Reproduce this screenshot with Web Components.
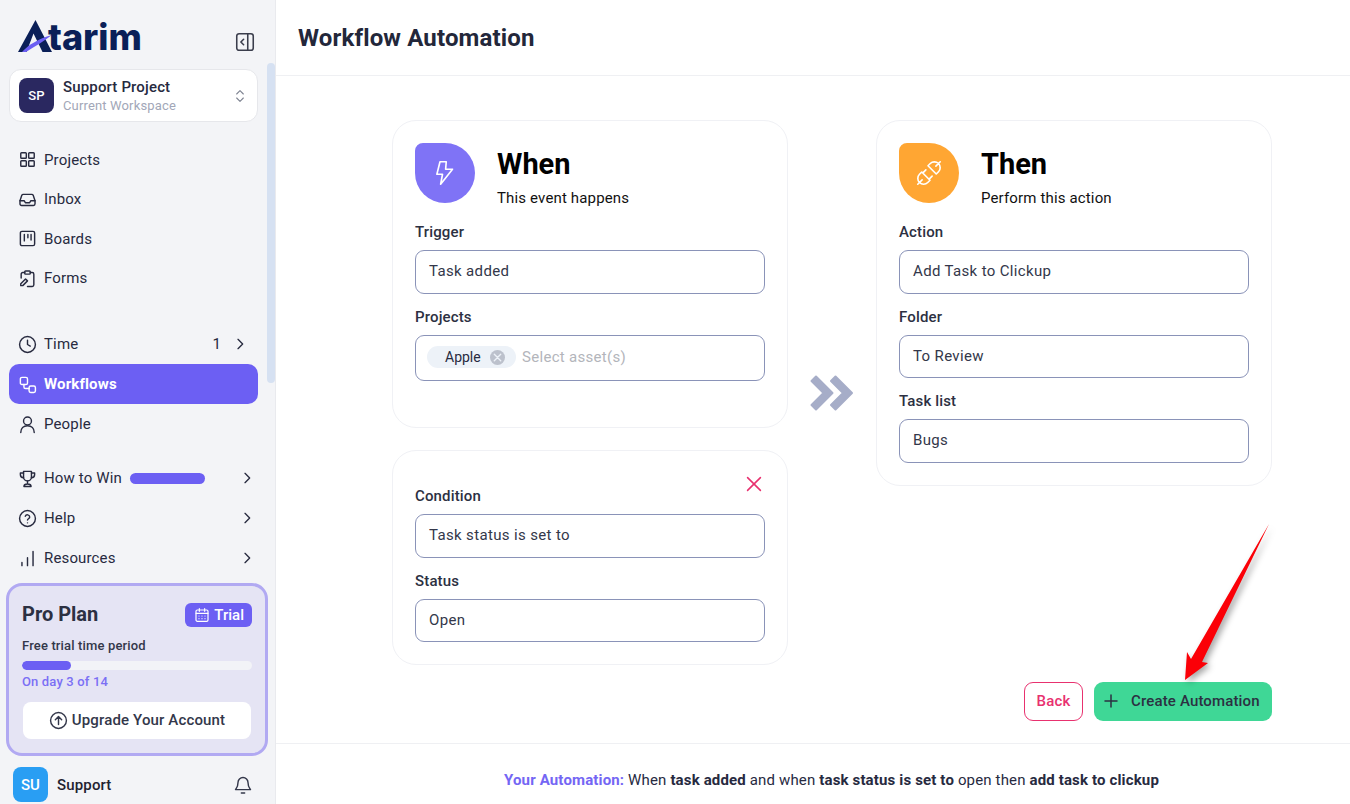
<!DOCTYPE html>
<html lang="en">
<head>
<meta charset="utf-8">
<title>Workflow Automation</title>
<style>
    html, body { margin: 0; height: 100%; overflow: hidden; background: #fff; }
    body { font-family: Roboto, "Liberation Sans", sans-serif; color: #272a3f; letter-spacing: .15px; }
</style>
</head>
<body>
<atarim-app></atarim-app>

<script>
"use strict";

class BaseComponent extends HTMLElement {
    constructor() {
        super();
        this.attachShadow({mode: "open"});
    }

    connectedCallback() {
        this.shadowRoot.innerHTML = `<style>${this.css || ""}</style>${this.html || ""}`;
    }

    attr(name, fallback = "") {
        const value = this.getAttribute(name);
        return value == null ? fallback : value;
    }

    static define(name) {
        if (customElements.get(name) == null) {
            customElements.define(name, this);
        }
    }
}

const svg = (body, size = 18, width = 2) => `<svg xmlns="http://www.w3.org/2000/svg" width="${size}" height="${size}" viewBox="0 0 24 24" fill="none" stroke="currentColor" stroke-width="${width}" stroke-linecap="round" stroke-linejoin="round">${body}</svg>`;

const ICONS = {
    projects: '<rect x="3.5" y="3.5" width="7" height="7" rx="1"/><rect x="13.5" y="3.5" width="7" height="7" rx="1"/><rect x="3.5" y="13.5" width="7" height="7" rx="1"/><rect x="13.5" y="13.5" width="7" height="7" rx="1"/>',
    inbox: '<path d="M2.5 13.5h5.2l1.6 2.5h5.4l1.6-2.5h5.2"/><path d="M6.6 5.5h10.8c.8 0 1.5.5 1.8 1.2l2.3 6.8v4c0 1.1-.9 2-2 2H4.5c-1.1 0-2-.9-2-2v-4l2.3-6.8c.3-.7 1-1.2 1.8-1.2z"/>',
    boards: '<rect x="3" y="3" width="18" height="18" rx="2"/><path d="M8 7v8M12.5 7v4M16.5 7v7"/>',
    forms: '<path d="M8.5 4.5H6a2 2 0 0 0-2 2v5M15.5 4.5H18a2 2 0 0 1 2 2V20a2 2 0 0 1-2 2h-6"/><rect x="8.5" y="2.5" width="7" height="4" rx="1"/><path d="M9.5 12.5l2.5 2.5-6 6H3.5v-2.5z"/>',
    clock: '<circle cx="12" cy="12" r="10"/><path d="M12 6.5V12l3.5 2"/>',
    workflows: '<rect x="3" y="3" width="9" height="9" rx="2"/><rect x="14" y="14" width="8" height="8" rx="2"/><path d="M7.5 12v3c0 1.1.9 2 2 2H14"/>',
    people: '<circle cx="12" cy="7.5" r="5"/><path d="M3.5 22c0-5 3.5-8.5 8.5-8.5s8.5 3.5 8.5 8.5"/>',
    trophy: '<path d="M7 3h10v7a5 5 0 0 1-10 0z"/><path d="M7 5H3v2a4 4 0 0 0 4 4M17 5h4v2a4 4 0 0 1-4 4M12 15v4M7.5 22c0-2 1.5-3 4.5-3s4.5 1 4.5 3z"/>',
    help: '<circle cx="12" cy="12" r="10"/><path d="M9.2 9.2a2.9 2.9 0 0 1 5.6.9c0 1.9-2.8 2.5-2.8 3.9"/><path d="M12 17.5h.01"/>',
    resources: '<path d="M5 21v-4M12 21V11M19 21V3"/>',
    chevron: '<path d="M9 5l7 7-7 7"/>',
    calendar: '<rect x="3" y="4.5" width="18" height="17" rx="2"/><path d="M3 9.5h18M8 2.5v4M16 2.5v4M7.5 13.5h.01M12 13.5h.01M16.5 13.5h.01M7.5 17.5h.01M12 17.5h.01M16.5 17.5h.01"/>',
    upgrade: '<circle cx="12" cy="12" r="10"/><path d="M12 17V7.5M8 11l4-4 4 4"/>',
    bell: '<path d="M6 9a6 6 0 0 1 12 0c0 6 2.5 7.5 3 8.5H3c.5-1 3-2.5 3-8.5z"/><path d="M10 21.5h4"/>',
    collapse: '<rect x="3" y="3" width="18" height="18" rx="2.5"/><path d="M15 3v18M10.5 9l-3 3 3 3"/>',
    updown: '<path d="M7 9l5-5 5 5M7 15l5 5 5-5"/>',
    bolt: '<path d="M13 3H8L5.5 13H10l-1.5 8L18 9h-5.5z"/>',
    plug: '<path d="M3 21l3.5-3.5M21 3l-3.5 3.5M6.2 11.2l6.6 6.6-1.8 1.8c-1.8 1.8-4.8 1.8-6.6 0s-1.8-4.8 0-6.6zM17.8 12.8l-6.6-6.6 1.8-1.8c1.8-1.8 4.8-1.8 6.6 0s1.8 4.8 0 6.6zM9.5 9.5l-2 2M14.5 14.5l-2 2"/>',
    close: '<path d="M5 5l14 14M19 5L5 19"/>',
    plus: '<path d="M12 4v16M4 12h16"/>',
};

class NavItem extends BaseComponent {
    get css() {
        return `
            :host { display: block; }
            .row { display: flex; align-items: center; height: var(--row, 40px); margin: 0 17px 0 9px; padding: 0 9px; box-sizing: border-box; border-radius: 10px; gap: 8px; font-size: 15px; color: #272a3f; }
            :host([active]) .row { background: #6c5ff3; color: #fff; font-weight: 700; }
            .icon { display: flex; width: 18px; justify-content: center; }
            .icon svg { flex: none; margin: 0 -.5px; }
            .grow { flex: 1; display: flex; align-items: center; min-width: 0; }
            .pill { width: 75px; height: 11px; border-radius: 6px; background: #6c5ff3; margin-left: 8px; }
            .count { margin-right: 3px; font-size: 15px; }
            .chev { display: flex; margin-right: var(--chev, 1px); }
        `;
    }

    get html() {
        const chevron = this.hasAttribute("chevron") ? `<span class="chev">${svg(ICONS.chevron, 16, 2)}</span>` : "";
        const count = this.hasAttribute("count") ? `<span class="count">${this.attr("count")}</span>` : "";
        const pill = this.hasAttribute("pill") ? `<span class="pill"></span>` : "";
        return `<div class="row"><span class="icon">${svg(ICONS[this.attr("icon")], 19, 1.8)}</span><span class="grow"><slot></slot>${pill}</span>${count}${chevron}</div>`;
    }
}

class WorkspaceCard extends BaseComponent {
    get css() {
        return `
            :host { display: flex; align-items: center; height: 53px; margin: 0 17px 0 9px; padding: 0 9px 0 9px; box-sizing: border-box; background: #fff; border: 1px solid #e6e7eb; border-radius: 12px; }
            .avatar { width: 35px; height: 35px; border-radius: 8px; background: #2a2860; color: #fff; font-size: 13px; font-weight: 500; display: flex; align-items: center; justify-content: center; }
            .text { flex: 1; margin-left: 9px; padding-top: 2px; }
            .name { font-size: 15px; font-weight: 500; line-height: 19px; color: #272a3f; }
            .sub { font-size: 13px; line-height: 18px; color: #a2a7b8; }
            .updown { display: flex; color: #7d8290; }
        `;
    }

    get html() {
        return `<div class="avatar">SP</div><div class="text"><div class="name">Support Project</div><div class="sub">Current Workspace</div></div><span class="updown">${svg(ICONS.updown, 16, 1.6)}</span>`;
    }
}

class PlanCard extends BaseComponent {
    get css() {
        return `
            :host { display: block; height: 173px; margin: 0 7px 0 6px; padding: 17px 13px 0; box-sizing: border-box; background: #e5e4f4; border: 3px solid #b1a9f2; border-radius: 16px; }
            .top { display: flex; justify-content: space-between; align-items: center; height: 24px; }
            h3 { margin: -2px 0 0; font-size: 20px; font-weight: 700; letter-spacing: 0; color: #2c3042; }
            .badge { display: flex; align-items: center; gap: 4px; height: 24px; padding: 0 8px 0 9px; background: #6c5ff3; color: #fff; border-radius: 6px; font-size: 15px; font-weight: 500; letter-spacing: 0; }
            .label { margin-top: 9px; font-size: 13px; line-height: 20px; font-weight: 500; color: #33374a; }
            .track { height: 9px; margin-top: 5px; background: #f2f3f7; border-radius: 5px; overflow: hidden; }
            .fill { width: 49px; height: 100%; background: #6c5ff3; border-radius: 5px; }
            .day { margin-top: 3px; font-size: 13px; line-height: 18px; font-weight: 500; color: #7b6ff4; }
            .upgrade { display: flex; align-items: center; justify-content: center; gap: 4px; height: 37px; margin: 11px 1px 0 1px; padding-bottom: 1px; box-sizing: border-box; background: #fff; border-radius: 8px; font-size: 15px; font-weight: 500; color: #33374a; }
            .upgrade svg { flex: none; }
        `;
    }

    get html() {
        return `
            <div class="top"><h3>Pro Plan</h3><span class="badge">${svg(ICONS.calendar, 16, 1.8)}Trial</span></div>
            <div class="label">Free trial time period</div>
            <div class="track"><div class="fill"></div></div>
            <div class="day">On day 3 of 14</div>
            <div class="upgrade">${svg(ICONS.upgrade, 19, 1.8)}Upgrade Your Account</div>
        `;
    }
}

class SideBar extends BaseComponent {
    get css() {
        return `
            :host { display: block; position: relative; z-index: 1; flex: none; width: 275px; height: 804px; box-sizing: border-box; background: #f3f4f7; box-shadow: 1px 0 0 #e9eaee; overflow: hidden; }
            .logo-row { display: flex; align-items: flex-start; justify-content: space-between; height: 69px; padding: 19px 19px 0 18px; box-sizing: border-box; }
            .logo { display: flex; align-items: flex-end; height: 34px; }
            .word { font-family: Inter, Roboto, sans-serif; font-weight: 800; font-size: 36px; line-height: 32px; letter-spacing: 0; color: #0a1f58; margin-left: -4px; }
            .collapse { display: flex; margin-top: 12px; color: #3a3d4c; }
            .group-a { --row: 39.5px; margin-top: 18px; }
            .group-b { margin-top: 26px; }
            .group-c { margin-top: 14px; --chev: -6px; }
            .plan { margin-top: 5px; display: block; }
            .foot { display: flex; align-items: center; height: 35px; margin-top: 11px; padding: 0 22px 0 13px; }
            .su { width: 35px; height: 35px; border-radius: 8px; background: #299ef3; color: #fff; font-size: 15px; font-weight: 500; display: flex; align-items: center; justify-content: center; }
            .who { flex: 1; margin-left: 9px; font-size: 15px; font-weight: 500; color: #1f2230; }
            .bell { display: flex; color: #33374a; }
            .thumb { position: absolute; right: 0; top: 63px; width: 8px; height: 320px; background: #d6e1f2; border-radius: 4px; }
        `;
    }

    get html() {
        return `
            <div class="logo-row">
                <div class="logo">
                    <svg width="34" height="34" viewBox="0 0 34 34"><path d="M17.5 1L34 33H24.5L15.5 14.5 8.5 33H0z" fill="#0a1f58"/><path d="M4 33C10 26 20 20 34 16 26 22 16 28 8 33z" fill="#6c5ff3"/></svg>
                    <span class="word">tarim</span>
                </div>
                <span class="collapse">${svg(ICONS.collapse, 22, 1.7)}</span>
            </div>
            <workspace-card></workspace-card>
            <div class="group-a">
                <nav-item icon="projects">Projects</nav-item>
                <nav-item icon="inbox">Inbox</nav-item>
                <nav-item icon="boards">Boards</nav-item>
                <nav-item icon="forms">Forms</nav-item>
            </div>
            <div class="group-b">
                <nav-item icon="clock" count="1" chevron>Time</nav-item>
                <nav-item icon="workflows" active>Workflows</nav-item>
                <nav-item icon="people">People</nav-item>
            </div>
            <div class="group-c">
                <nav-item icon="trophy" pill chevron>How to Win</nav-item>
                <nav-item icon="help" chevron>Help</nav-item>
                <nav-item icon="resources" chevron>Resources</nav-item>
            </div>
            <plan-card class="plan"></plan-card>
            <div class="foot"><div class="su">SU</div><div class="who">Support</div><span class="bell">${svg(ICONS.bell, 20, 1.7)}</span></div>
            <div class="thumb"></div>
        `;
    }
}

class FormField extends BaseComponent {
    get css() {
        return `
            :host { display: block; margin-bottom: 11px; }
            label { display: block; font-size: 15px; font-weight: 500; line-height: 22px; padding-top: 1px; margin-bottom: 7px; color: #2c3042; }
            .box { display: flex; align-items: center; height: var(--h, 44px); box-sizing: border-box; padding: 0 13px var(--pb, 2px); border: 1px solid #8a93b8; border-radius: 9px; font-size: 15px; letter-spacing: .35px; color: #33374a; background: #fff; }
        `;
    }

    get html() {
        return `<label>${this.attr("label")}</label><div class="box"><slot></slot></div>`;
    }
}

class TagSelect extends BaseComponent {
    get css() {
        return `
            :host { display: flex; align-items: center; margin-left: -2px; }
            .tag { display: flex; align-items: center; width: 89px; height: 22px; box-sizing: border-box; padding-left: 18px; background: #edf2f8; border-radius: 11px; font-size: 14px; letter-spacing: 0; color: #272a3f; }
            .x { width: 15px; height: 15px; margin-left: 9px; border-radius: 50%; background: #bcc1cc; display: flex; align-items: center; justify-content: center; color: #edf2f8; }
            .ph { margin-left: 6px; color: #b3b5bb; font-size: 15px; letter-spacing: .3px; }
        `;
    }

    get html() {
        return `<span class="tag">Apple<span class="x">${svg(ICONS.close, 11, 3)}</span></span><span class="ph">Select asset(s)</span>`;
    }
}

class StepCard extends BaseComponent {
    get css() {
        return `
            :host { display: block; box-sizing: border-box; padding: 22px 22px 0; background: #fff; border: 1px solid #f0f1f5; border-radius: 24px; }
            .head { display: flex; height: 77px; }
            .badge { width: 60px; height: 60px; flex: none; border-radius: 8px 50% 50% 50%; display: flex; align-items: center; justify-content: center; color: #fff; background: var(--accent); }
            .text { margin-left: 22px; color: #000; }
            h2 { margin: 0; font-size: 29px; line-height: 42px; font-weight: 700; letter-spacing: 0; }
            p { margin: 1px 0 0; font-size: 15px; line-height: 24px; color: #111; }
        `;
    }

    get html() {
        return `
            <div class="head">
                <div class="badge">${svg(ICONS[this.attr("icon")], 30, 1.3)}</div>
                <div class="text"><h2>${this.attr("title")}</h2><p>${this.attr("subtitle")}</p></div>
            </div>
            <slot></slot>
        `;
    }
}

class ConditionCard extends BaseComponent {
    get css() {
        return `
            :host { display: block; position: relative; height: 215px; box-sizing: border-box; padding: 33px 22px 0; background: #fff; border: 1px solid #f0f1f5; border-radius: 24px; }
            .remove { position: absolute; display: flex; top: 22px; right: 22px; color: #e8316f; }
        `;
    }

    get html() {
        return `
            <span class="remove">${svg(ICONS.close, 22, 1.7)}</span>
            <form-field label="Condition">Task status is set to</form-field>
            <form-field label="Status" style="--h:43px;--pb:1px">Open</form-field>
        `;
    }
}

class ActionButton extends BaseComponent {
    get css() {
        return `
            :host { display: inline-flex; align-items: center; height: 39px; box-sizing: border-box; border-radius: 9px; font-size: 15px; font-weight: 500; padding-bottom: 1px; }
            :host([kind="back"]) { width: 59px; justify-content: center; border: 1px solid #e8316f; color: #e8316f; background: #fff; }
            :host([kind="create"]) { width: 178px; padding-left: 8px; gap: 11px; background: #3fd796; color: #2c3042; }
            span { display: flex; }
        `;
    }

    get html() {
        const icon = this.hasAttribute("icon") ? `<span>${svg(ICONS[this.attr("icon")], 18, 2)}</span>` : "";
        return `${icon}<slot></slot>`;
    }
}

class MainPanel extends BaseComponent {
    get css() {
        return `
            :host { display: flex; flex-direction: column; position: relative; flex: 1; height: 804px; min-width: 0; background: #fff; }
            header { height: 76px; flex: none; box-sizing: border-box; border-bottom: 1px solid #eff0f3; padding: 22px 0 0 23px; }
            h1 { margin: 0; font-size: 24px; line-height: 33px; font-weight: 700; color: #23273a; }
            .content { flex: 1; padding: 44px 0 0 117px; }
            .grid { display: grid; grid-template-columns: 396px 88px 396px; width: 880px; }
            .left { display: flex; flex-direction: column; gap: 22px; }
            .when { height: 308px; }
            .then { height: 366px; }
            .arrows { display: flex; justify-content: center; align-items: flex-start; padding-top: 255px; color: #a6adc8; }
            .buttons { display: flex; justify-content: flex-end; gap: 11px; width: 880px; margin-top: 17px; }
            footer { height: 61px; flex: none; box-sizing: border-box; border-top: 1px solid #eff0f3; display: flex; align-items: center; justify-content: center; padding: 12px 0 0 38px; font-size: 15px; color: #272a3f; }
            footer b { font-weight: 700; }
            footer .lead { color: #7466f4; }
            .pointer { position: absolute; left: 900px; top: 515px; filter: drop-shadow(3px 3px 3px rgba(0,0,0,.35)); }
        `;
    }

    get html() {
        return `
            <header><h1>Workflow Automation</h1></header>
            <div class="content">
                <div class="grid">
                    <div class="left">
                        <step-card class="when" icon="bolt" title="When" subtitle="This event happens" style="--accent:#7f73f6">
                            <form-field label="Trigger">Task added</form-field>
                            <form-field label="Projects" style="--h:46px"><tag-select></tag-select></form-field>
                        </step-card>
                        <condition-card></condition-card>
                    </div>
                    <div class="arrows">
                        <svg width="44" height="36" viewBox="0 0 44 36" fill="currentColor" stroke="currentColor" stroke-width="2" stroke-linejoin="round"><polygon points="6,1.5 1.5,6 13.5,18 1.5,30 6,34.5 22.5,18"/><polygon points="25.5,1.5 21,6 33,18 21,30 25.5,34.5 42,18"/></svg>
                    </div>
                    <step-card class="then" icon="plug" title="Then" subtitle="Perform this action" style="--accent:#ffa633">
                        <form-field label="Action">Add Task to Clickup</form-field>
                        <form-field label="Folder" style="--h:43px;--pb:1px">To Review</form-field>
                        <form-field label="Task list">Bugs</form-field>
                    </step-card>
                </div>
                <div class="buttons">
                    <action-button kind="back">Back</action-button>
                    <action-button kind="create" icon="plus">Create Automation</action-button>
                </div>
            </div>
            <footer><span><b class="lead">Your Automation:</b> When <b>task added</b> and when <b>task status is set to</b> open then <b>add task to clickup</b></span></footer>
            <svg class="pointer" width="110" height="180" viewBox="900 515 110 180"><polygon points="994,524 927,662 933,663 910,680 912,652 916,659" fill="#fb0007"/></svg>
        `;
    }
}

class AtarimApp extends BaseComponent {
    get css() {
        return `:host { display: flex; width: 1350px; height: 804px; overflow: hidden; }`;
    }

    get html() {
        return `<side-bar></side-bar><main-panel></main-panel>`;
    }
}

NavItem.define("nav-item");
WorkspaceCard.define("workspace-card");
PlanCard.define("plan-card");
SideBar.define("side-bar");
FormField.define("form-field");
TagSelect.define("tag-select");
StepCard.define("step-card");
ConditionCard.define("condition-card");
ActionButton.define("action-button");
MainPanel.define("main-panel");
AtarimApp.define("atarim-app");
</script>
</body>
</html>
